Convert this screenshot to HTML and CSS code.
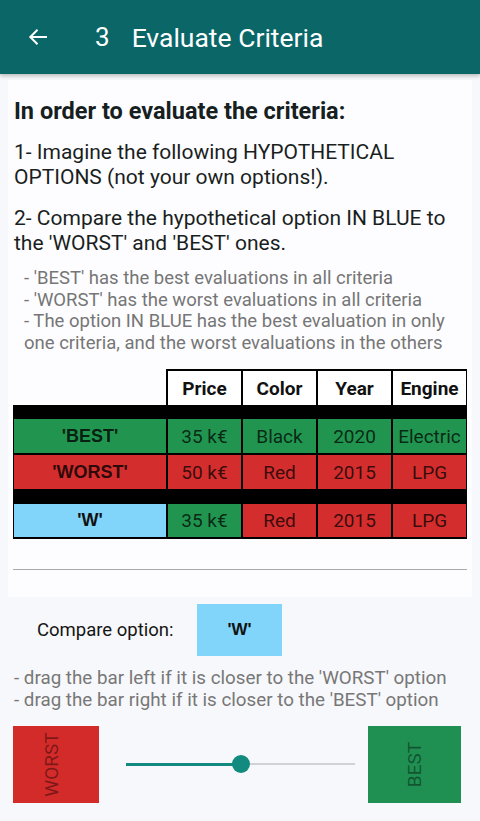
FILE: index.html
```html
<!DOCTYPE html>
<html>
<head>
<meta charset="utf-8">
<link rel="stylesheet" href="styles.css">
</head>
<body>
<header class="appbar">
  <svg class="back" width="24" height="24" viewBox="0 0 24 24"><path d="M21 12H4.5M11.5 4.8L4.3 12l7.2 7.2" fill="none" stroke="#fff" stroke-width="2"/></svg>
  <span class="step">3</span>
  <span class="title">Evaluate Criteria</span>
</header>
<main class="card">
  <h1 class="heading">In order to evaluate the criteria:</h1>
  <p class="para">1- Imagine the following HYPOTHETICAL OPTIONS (not your own options!).</p>
  <p class="para">2- Compare the hypothetical option IN BLUE to the 'WORST' and 'BEST' ones.</p>
  <ul class="notes">
    <li>- 'BEST' has the best evaluations in all criteria</li>
    <li>- 'WORST' has the worst evaluations in all criteria</li>
    <li>- The option IN BLUE has the best evaluation in only one criteria, and the worst evaluations in the others</li>
  </ul>
  <div class="table">
    <div class="thead">
      <div class="th">Price</div>
      <div class="th">Color</div>
      <div class="th">Year</div>
      <div class="th">Engine</div>
    </div>
    <div class="tbody">
      <div class="td label green">'BEST'</div>
      <div class="td green">35 k€</div>
      <div class="td green">Black</div>
      <div class="td green">2020</div>
      <div class="td green">Electric</div>
      <div class="td label red">'WORST'</div>
      <div class="td red">50 k€</div>
      <div class="td red">Red</div>
      <div class="td red">2015</div>
      <div class="td red">LPG</div>
      <div class="bar"></div>
      <div class="td label blue">'W'</div>
      <div class="td green">35 k€</div>
      <div class="td red">Red</div>
      <div class="td red">2015</div>
      <div class="td red">LPG</div>
    </div>
  </div>
  <hr class="rule">
</main>
<section class="compare">
  <span class="compare-label">Compare option:</span>
  <div class="option">'W'</div>
</section>
<div class="hints">
  <div>- drag the bar left if it is closer to the 'WORST' option</div>
  <div>- drag the bar right if it is closer to the 'BEST' option</div>
</div>
<section class="slider-row">
  <div class="end worst"><span>WORST</span></div>
  <div class="slider">
    <div class="track"><div class="active"></div><div class="thumb"></div></div>
  </div>
  <div class="end best"><span>BEST</span></div>
</section>
</body>
</html>
```
FILE: styles.css
```css
* { box-sizing: border-box; }
body {
  margin: 0;
  background: #f7f8fb;
  font-family: Roboto, "Liberation Sans", sans-serif;
  width: 480px;
  height: 821px;
  overflow: hidden;
}
.appbar {
  height: 74px;
  background: #0b6668;
  display: flex;
  align-items: center;
  padding-left: 26px;
  color: #fff;
  box-shadow: 0 2px 4px rgba(0,0,0,0.25);
  position: relative;
}
.back { width: 24px; height: 24px; }
.step { font-size: 26px; margin-left: 45px; font-weight: 400; }
.title { font-size: 26.5px; margin-left: 22px; font-weight: 400; }
.card {
  margin: 6px 8px 0;
  padding: 17px 5px 27px;
  background: #fdfdff;
}
.heading {
  margin: 0 1px 15px;
  font-size: 23.5px;
  font-weight: 700;
  color: #16211f;
  line-height: 28px;
}
.para {
  margin: 0 1px 17px;
  font-size: 21px;
  line-height: 24.5px;
  color: #1a1f1e;
}
.notes {
  list-style: none;
  margin: -4px 0 15px 11px;
  padding: 0;
  color: #767676;
  font-size: 18.5px;
  line-height: 21.5px;
}
.table { width: 454px; }
.thead {
  margin-left: 153px;
  background: #000;
  display: grid;
  grid-template-columns: repeat(4, 73px);
  gap: 2px;
  padding: 2px 1px 0 2px;
}
.th {
  background: #fff;
  height: 34px;
  display: flex;
  align-items: center;
  justify-content: center;
  font-weight: 700;
  font-size: 19px;
  color: #111;
}
.tbody {
  background: #000;
  display: grid;
  grid-template-columns: 152px repeat(4, 73px);
  grid-template-rows: 34px 34px 11px 33px;
  column-gap: 2px;
  row-gap: 2px;
  padding: 14px 1px 2px 1px;
}
.bar { grid-column: 1 / -1; background: #000; }
.td {
  display: flex;
  align-items: center;
  justify-content: center;
  font-size: 19px;
  color: rgba(0,0,0,0.74);
}
.label {
  font-family: "Liberation Sans", Arial, sans-serif;
  font-weight: 700;
  font-size: 18px;
  color: rgba(0,0,0,0.8);
}
.green { background: #21954f; }
.red { background: #d32d2d; }
.blue { background: #81d4fa; color: #111; }
.rule {
  border: 0;
  border-top: 1.5px solid #a9a9a9;
  margin: 30px 0 0;
}
.compare {
  display: flex;
  align-items: center;
  margin-top: 7px;
  padding-left: 37px;
  height: 52px;
}
.compare-label { font-size: 18.5px; color: #151515; width: 160px; }
.option {
  width: 85px;
  height: 52px;
  background: #81d4fa;
  display: flex;
  align-items: center;
  justify-content: center;
  font-family: "Liberation Sans", Arial, sans-serif;
  font-weight: 700;
  font-size: 17px;
  color: #111;
}
.hints {
  margin-top: 11px;
  padding-left: 14px;
  font-size: 18.8px;
  line-height: 22px;
  color: #777;
}
.slider-row {
  display: flex;
  align-items: center;
  margin-top: 15px;
  padding-left: 13px;
}
.end {
  height: 77px;
  display: flex;
  align-items: center;
  justify-content: center;
}
.end span {
  transform: rotate(-90deg);
  font-size: 19px;
  color: rgba(0,0,0,0.42);
  white-space: nowrap;
}
.worst { width: 86px; background: #d32a2a; padding-right: 10px; }
.best { width: 93px; background: #1f8f52; }
.slider { width: 269px; padding: 0 13px 0 27px; }
.track {
  position: relative;
  height: 2px;
  background: #cfd3d3;
}
.active {
  width: 115px;
  height: 3px;
  margin-top: -0.5px;
  background: #128a80;
}
.thumb {
  position: absolute;
  left: 106px;
  top: -8px;
  width: 18px;
  height: 18px;
  border-radius: 50%;
  background: #128a80;
}
```
